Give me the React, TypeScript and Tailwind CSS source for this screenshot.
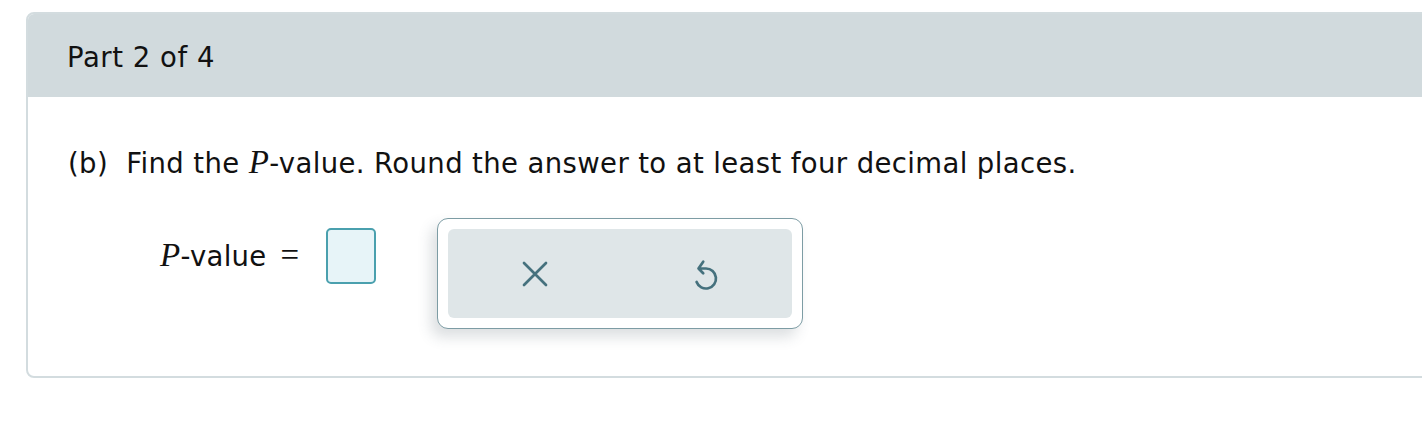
import React from "react";

const sans = { fontFamily: '"DejaVu Sans", Verdana, sans-serif' };
const serif = { fontFamily: '"Liberation Serif", "Times New Roman", serif' };

function XIcon() {
  return (
    <svg width="26" height="26" viewBox="0 0 26 26" fill="none">
      <path d="M2 2 L24 24 M24 2 L2 24" stroke="#45717d" strokeWidth="2.7" strokeLinecap="round" />
    </svg>
  );
}

function UndoIcon() {
  return (
    <svg width="24" height="33" viewBox="0 0 24 33" fill="none">
      <path
        d="M9.2 3.7 L4.5 10.5 L9.2 15.2 M4.5 10.5 H12 A10 10 0 1 1 2.6 24"
        stroke="#45717d"
        strokeWidth="2.7"
        strokeLinecap="round"
        strokeLinejoin="round"
      />
    </svg>
  );
}

export default function App() {
  return (
    <div className="w-full h-[428px] overflow-hidden bg-white" style={sans}>
      <div className="ml-[26px] mt-[12px] w-[1420px] h-[366px] rounded-[8px] border-2 border-[#d3dcdf] overflow-hidden flex flex-col">
        <div className="h-[85px] shrink-0 bg-[#d1dadd] flex items-center pl-[41px] -mt-[2px] -mx-[2px] pt-[6px]">
          <span className="text-[27.5px] tracking-[0.55px] text-[#111]">Part 2 of 4</span>
        </div>
        <div className="flex-1 pl-[40px] pt-[48px]">
          <div className="text-[27.5px] tracking-[0.38px] text-[#111] leading-[34px] flex items-baseline">
            <span>(b)&nbsp;&nbsp;Find the&nbsp;</span>
            <span className="italic text-[33px]" style={serif}>P</span>
            <span>-value. Round the answer to at least four decimal places.</span>
          </div>
          <div className="flex items-start mt-[38px]">
            <div className="flex items-center h-[56px] pl-[92px] mt-[10px]">
              <div className="flex items-baseline text-[27.5px] tracking-[0.3px] text-[#111]">
                <span className="italic text-[33px]" style={serif}>P</span>
                <span>-value</span>
                <span className="ml-[14px] text-[33px]" style={serif}>=</span>
              </div>
              <div className="ml-[26px] w-[50px] h-[56px] rounded-[5px] border-2 border-[#4aa0ae] bg-[#e7f4f8]" />
            </div>
            <div className="ml-[61px] w-[366px] h-[111px] rounded-[11px] border-[1.5px] border-[#7d9ca4] bg-white p-[10px] shadow-[-6px_8px_14px_rgba(60,80,90,0.18)]">
              <div className="w-full h-full rounded-[6px] bg-[#dfe6e8] flex items-center">
                <div className="w-1/2 flex justify-center pl-[2px]">
                  <XIcon />
                </div>
                <div className="w-1/2 flex justify-center mt-[2px]">
                  <UndoIcon />
                </div>
              </div>
            </div>
          </div>
        </div>
      </div>
    </div>
  );
}
